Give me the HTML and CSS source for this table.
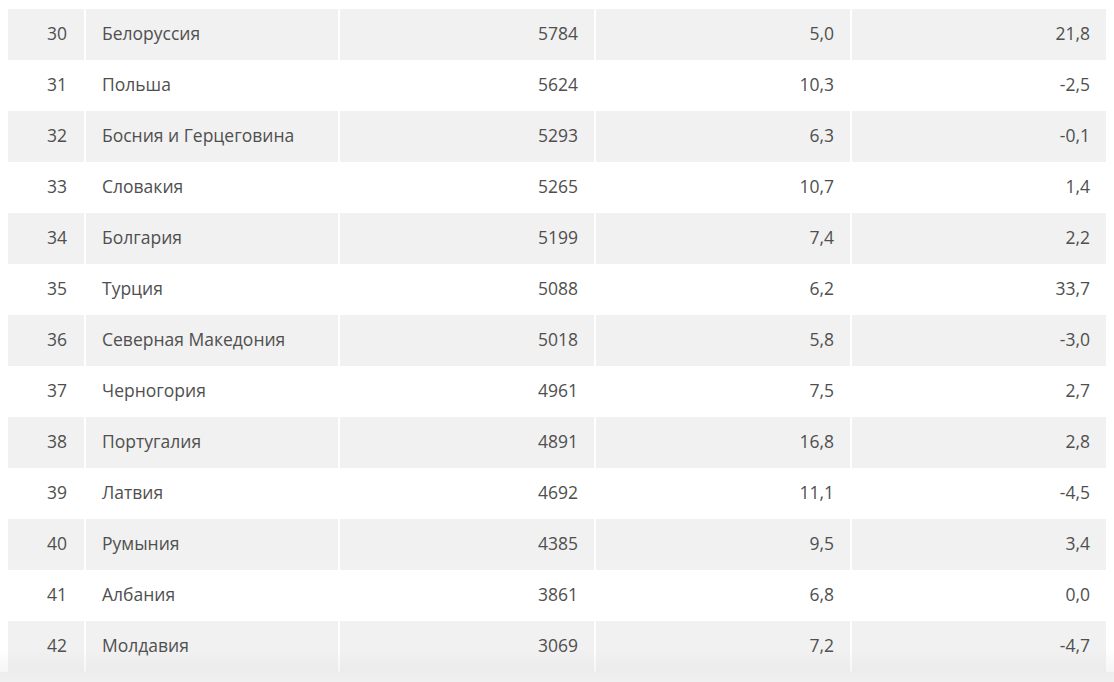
FILE: index.html
```html
<!DOCTYPE html>
<html lang="ru">
<head>
<meta charset="utf-8">
<link rel="stylesheet" href="styles.css">
</head>
<body>
<div class="wrap">
<table class="data">
<colgroup><col class="c1"><col class="c2"><col class="c3"><col class="c4"><col class="c5"></colgroup>
<tbody>
<tr><td class="n">30</td><td class="name">Белоруссия</td><td class="num">5784</td><td class="num">5,0</td><td class="num">21,8</td></tr>
<tr><td class="n">31</td><td class="name">Польша</td><td class="num">5624</td><td class="num">10,3</td><td class="num">-2,5</td></tr>
<tr><td class="n">32</td><td class="name">Босния и Герцеговина</td><td class="num">5293</td><td class="num">6,3</td><td class="num">-0,1</td></tr>
<tr><td class="n">33</td><td class="name">Словакия</td><td class="num">5265</td><td class="num">10,7</td><td class="num">1,4</td></tr>
<tr><td class="n">34</td><td class="name">Болгария</td><td class="num">5199</td><td class="num">7,4</td><td class="num">2,2</td></tr>
<tr><td class="n">35</td><td class="name">Турция</td><td class="num">5088</td><td class="num">6,2</td><td class="num">33,7</td></tr>
<tr><td class="n">36</td><td class="name">Северная Македония</td><td class="num">5018</td><td class="num">5,8</td><td class="num">-3,0</td></tr>
<tr><td class="n">37</td><td class="name">Черногория</td><td class="num">4961</td><td class="num">7,5</td><td class="num">2,7</td></tr>
<tr><td class="n">38</td><td class="name">Португалия</td><td class="num">4891</td><td class="num">16,8</td><td class="num">2,8</td></tr>
<tr><td class="n">39</td><td class="name">Латвия</td><td class="num">4692</td><td class="num">11,1</td><td class="num">-4,5</td></tr>
<tr><td class="n">40</td><td class="name">Румыния</td><td class="num">4385</td><td class="num">9,5</td><td class="num">3,4</td></tr>
<tr><td class="n">41</td><td class="name">Албания</td><td class="num">3861</td><td class="num">6,8</td><td class="num">0,0</td></tr>
<tr><td class="n">42</td><td class="name">Молдавия</td><td class="num">3069</td><td class="num">7,2</td><td class="num">-4,7</td></tr>
</tbody>
</table>
<div class="band"></div>
<div class="fade"></div>
</div>
</body>
</html>
```
FILE: styles.css
```css
html, body {
  margin: 0;
  padding: 0;
  background: #fff;
  height: 682px;
  overflow: hidden;
}
.wrap {
  position: relative;
  padding: 9px 0 0 0;
  height: 673px;
  background: #fff;
}
.data {
  border-collapse: collapse;
  table-layout: fixed;
  width: 1098px;
  margin-left: 8px;
  font-family: "Open Sans", "Liberation Sans", sans-serif;
  font-size: 17.5px;
  color: #4f4f4f;
}
.c1 { width: 77px; }
.c2 { width: 254px; }
.c3 { width: 256px; }
.c4 { width: 256px; }
.c5 { width: 255px; }
.data td {
  height: 51px;
  padding: 0 16px 4px 16px;
  box-sizing: border-box;
  border-left: 2px solid #fff;
  background: #fff;
  white-space: nowrap;
}
.data td:first-child { border-left: 0; }
.data tr:nth-child(odd) td { background: #f1f1f1; }
.data td.n { text-align: right; padding-right: 17px; }
.data td.name { text-align: left; }
.data td.num { text-align: right; }
.band {
  height: 20px;
  background: #f2f2f2;
}
.fade {
  position: absolute;
  left: 0;
  right: 0;
  bottom: 0;
  height: 32px;
  background: linear-gradient(to bottom, rgba(225,225,225,0), rgba(225,225,225,0.3) 60%, rgba(238,238,238,0.5));
}
```
